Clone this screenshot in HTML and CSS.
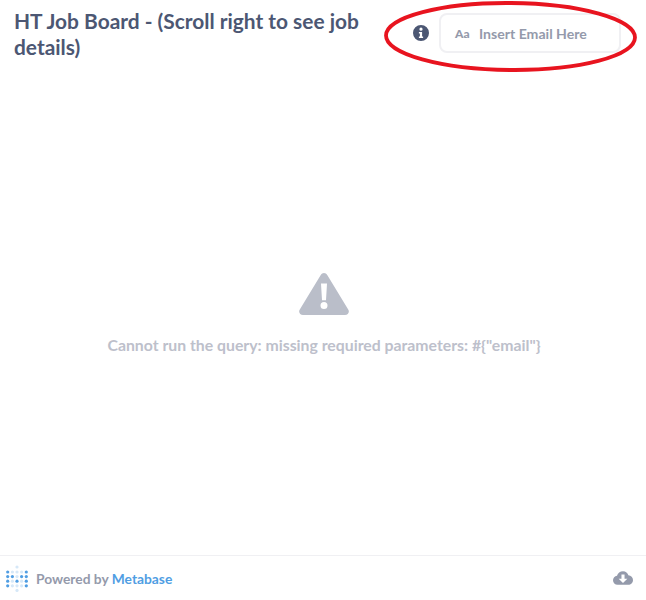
FILE: index.html
```html
<!DOCTYPE html>
<html>
  <head>
    <meta charset="utf-8">
    <title>HT Job Board</title>
    <link rel="stylesheet" href="styles.css">
  </head>
  <body>
    <div class="page">
      <!-- header -->
      <div class="header">
        <h1 class="title">HT Job Board - (Scroll right to see job details)</h1>
        <div class="filters">
          <svg class="info-icon" viewBox="0 0 16 16">
            <path fill="#4c5773" fill-rule="evenodd" d="M8 0a8 8 0 1 1 0 16A8 8 0 0 1 8 0zM8 2.6a1.6 1.6 0 1 0 0 3.2 1.6 1.6 0 0 0 0-3.2zM5.9 7v1.4h1v3.2h-1V13h4.2v-1.4h-1V7z"/>
          </svg>
          <div class="param">
            <span class="param-aa">Aa</span>
            <span class="param-label">Insert Email Here</span>
          </div>
        </div>
      </div>
      <!-- error state -->
      <div class="body">
        <svg class="warn-icon" viewBox="0 0 50 42">
          <path fill="#babec9" fill-rule="evenodd" d="M21.6 2.2c1.6-2.9 5.2-2.9 6.8 0l20.8 34.2c1.7 2.8-.1 5.6-3.2 5.6H4c-3.1 0-4.9-2.8-3.2-5.6zM22 10.5l1 16.8h4l1-16.8zM25 29a3.5 3.5 0 1 0 0 7 3.5 3.5 0 0 0 0-7z"/>
        </svg>
        <p class="error-text">Cannot run the query: missing required parameters: #{"email"}</p>
      </div>
      <!-- footer -->
      <div class="footer">
        <div class="brand">
          <svg class="logo" viewBox="0 0 22 27">
            <g fill="#509ee3">
              <circle cx="1.7" cy="7" r="1.6"/><circle cx="20.3" cy="7" r="1.6"/>
              <circle cx="1.7" cy="11.6" r="1.6"/><circle cx="6.4" cy="11.6" r="1.6"/><circle cx="15.6" cy="11.6" r="1.6"/><circle cx="20.3" cy="11.6" r="1.6"/>
              <circle cx="1.7" cy="16.2" r="1.6"/><circle cx="11" cy="16.2" r="1.6"/><circle cx="20.3" cy="16.2" r="1.6"/>
              <circle cx="1.7" cy="20.8" r="1.6"/><circle cx="20.3" cy="20.8" r="1.6"/>
            </g>
            <g fill="#d6e8f8">
              <circle cx="11" cy="2" r="1.6"/>
              <circle cx="6.4" cy="7" r="1.6"/><circle cx="11" cy="7" r="1.6"/><circle cx="15.6" cy="7" r="1.6"/>
              <circle cx="11" cy="11.6" r="1.6"/>
              <circle cx="6.4" cy="16.2" r="1.6"/><circle cx="15.6" cy="16.2" r="1.6"/>
              <circle cx="6.4" cy="20.8" r="1.6"/><circle cx="11" cy="20.8" r="1.6"/><circle cx="15.6" cy="20.8" r="1.6"/>
              <circle cx="11" cy="25.4" r="1.6"/>
            </g>
          </svg>
          <span class="powered">Powered by <span class="metabase">Metabase</span></span>
        </div>
        <svg class="download-icon" viewBox="0 0 22 16">
          <path fill="#949aab" fill-rule="evenodd" d="M11 0c3 0 5.3 1.9 5.9 4.5C19.8 4.7 22 6.9 22 9.6c0 3-2.3 5.4-5.2 5.4H5c-2.8 0-5-2.2-5-5 0-2.6 1.9-4.7 4.4-5C5.2 2 7.8 0 11 0zM9.3 3.6v4.6H6.2L11 13l4.8-4.8h-3.1V3.6z"/>
        </svg>
      </div>
    </div>
    <!-- hand drawn annotation over the filter -->
    <svg class="annotation" viewBox="0 0 264 80">
      <ellipse cx="128.5" cy="36.5" rx="124.5" ry="33.5" fill="none" stroke="#e8141f" stroke-width="3.8" transform="rotate(0.5 128.5 36.5)"/>
    </svg>
  </body>
</html>
```

FILE: styles.css
```css
html, body {
  height: 100%;
}
body {
  margin: 0;
  position: relative;
  background: #fff;
  font-family: Lato, "Open Sans", sans-serif;
  overflow: hidden;
}
.page {
  display: flex;
  flex-direction: column;
  height: 600px;
}
/* header */
.header {
  display: flex;
  justify-content: space-between;
  padding: 8px 25px 0 14px;
  height: 66px;
  box-sizing: border-box;
}
.title {
  width: 370px;
  margin: 0;
  color: #4c5773;
  font-size: 20.9px;
  font-weight: 700;
  line-height: 26px;
}
.filters {
  display: flex;
  align-items: flex-start;
  gap: 10px;
  padding-top: 5px;
}
.info-icon {
  width: 16px;
  height: 16px;
  margin-top: 12px;
}
.param {
  display: flex;
  align-items: center;
  width: 182px;
  height: 40px;
  box-sizing: border-box;
  padding-left: 14px;
  border: 2px solid #f0f0f3;
  border-radius: 8px;
}
.param-aa {
  width: 24px;
  color: #949aab;
  font-size: 12px;
  font-weight: 900;
}
.param-label {
  color: #949aab;
  font-size: 14.1px;
  font-weight: 700;
}
/* error state */
.body {
  flex: 1;
  display: flex;
  flex-direction: column;
  align-items: center;
  padding: 207px 0 0 2px;
}
.warn-icon {
  width: 50px;
  height: 42px;
}
.error-text {
  margin: 20px 0 0;
  color: #bdc0cb;
  font-size: 15.8px;
  font-weight: 700;
  line-height: 20px;
}
/* footer */
.footer {
  display: flex;
  justify-content: space-between;
  align-items: center;
  height: 44px;
  padding: 0 13px 0 6px;
  border-top: 1px solid #f0f0f3;
}
.brand {
  display: flex;
  align-items: center;
  gap: 8px;
}
.logo {
  width: 22px;
  height: 27px;
}
.powered {
  color: #949aab;
  font-size: 13.8px;
  font-weight: 700;
}
.metabase {
  color: #509ee3;
}
.download-icon {
  width: 20px;
  height: 15px;
}
/* annotation */
.annotation {
  position: absolute;
  top: 0;
  left: 382px;
  width: 264px;
  height: 80px;
}
```
